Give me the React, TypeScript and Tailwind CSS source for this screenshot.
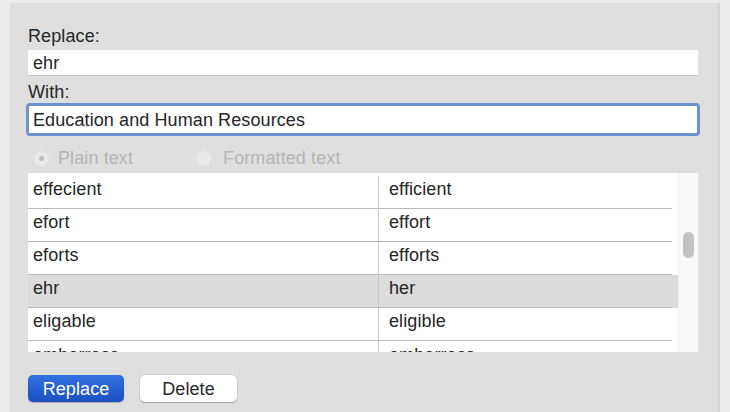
const rows = [
  ["effecient", "efficient"],
  ["efort", "effort"],
  ["eforts", "efforts"],
  ["ehr", "her"],
  ["eligable", "eligible"],
  ["embarrass", "embarrass"],
];

export default function App() {
  const selected = 3;

  return (
    <div className="w-[730px] h-[412px] bg-[#ececec] pt-[3px] pl-[10px] flex font-['Liberation_Sans',Arial,sans-serif] text-[18px] tracking-[0.1px] text-[#262626] overflow-hidden">
      <div className="w-[710px] h-[409px] bg-[#dfdfe0] border-r-2 border-[#d4d4d5] pl-[18px] pr-[20px] flex flex-col">
        <div className="mt-[23px] leading-[20px]">Replace:</div>
        <div className="mt-[4px] h-[26px] bg-white border-b border-[#c4c4c4] px-[5px] flex items-center leading-none">
          ehr
        </div>
        <div className="mt-[6px] leading-[20px]">With:</div>
        <div className="mt-[1px] -mx-[2px] h-[33px] bg-white border-[3px] border-[#6c92cf] rounded-[4px] px-[4px] flex items-center leading-none">
          Education and Human Resources
        </div>
        <div className="mt-[12px] h-[20px] flex items-center text-[#b4b4b4]">
          <div className="ml-[6px] w-[15px] h-[15px] rounded-full bg-[#e9e9ea] flex items-center justify-center">
            <div className="w-[5px] h-[5px] rounded-full bg-[#bdbdbd]" />
          </div>
          <span className="ml-[9px]">Plain text</span>
          <div className="ml-[63px] w-[15px] h-[15px] rounded-full bg-[#e9e9ea]" />
          <span className="ml-[12px]">Formatted text</span>
        </div>
        <div className="mt-[5px] h-[179px] bg-white flex overflow-hidden">
          <div className="flex-1 pt-[3px] overflow-hidden">
            {rows.map(([from, to], i) => (
              <div
                key={from}
                className={`h-[33px] flex ${i === selected ? "bg-[#dcdcdc]" : ""}`}
              >
                <div className={`w-[351px] border-r border-[#c8c8c8] pl-[5px] pb-[5px] flex items-center ${i < rows.length - 1 ? "border-b border-b-[#b9b9b9]" : ""}`}>
                  {from}
                </div>
                <div className={`flex-1 pl-[10px] pb-[5px] flex items-center ${i < rows.length - 1 ? "border-b border-b-[#b9b9b9] mr-[6px]" : ""}`}>
                  {to}
                </div>
              </div>
            ))}
          </div>
          <div className="w-[20px] bg-[#f9f9f9] border-l border-[#ededed] pt-[59px] flex justify-center">
            <div className="w-[11px] h-[26px] rounded-full bg-[#c2c2c2]" />
          </div>
        </div>
        <div className="mt-[23px] flex gap-[16px]">
          <button className="w-[96px] h-[27px] rounded-[5px] bg-gradient-to-b from-[#3371e0] to-[#1b4fc2] text-white leading-none shadow-[0_1px_1px_rgba(0,0,0,0.25)]">
            Replace
          </button>
          <button className="w-[97px] h-[27px] rounded-[5px] bg-white text-[#2a2a2a] leading-none shadow-[0_0_0_0.5px_rgba(0,0,0,0.15),0_1px_1px_rgba(0,0,0,0.2)]">
            Delete
          </button>
        </div>
      </div>
    </div>
  );
}
